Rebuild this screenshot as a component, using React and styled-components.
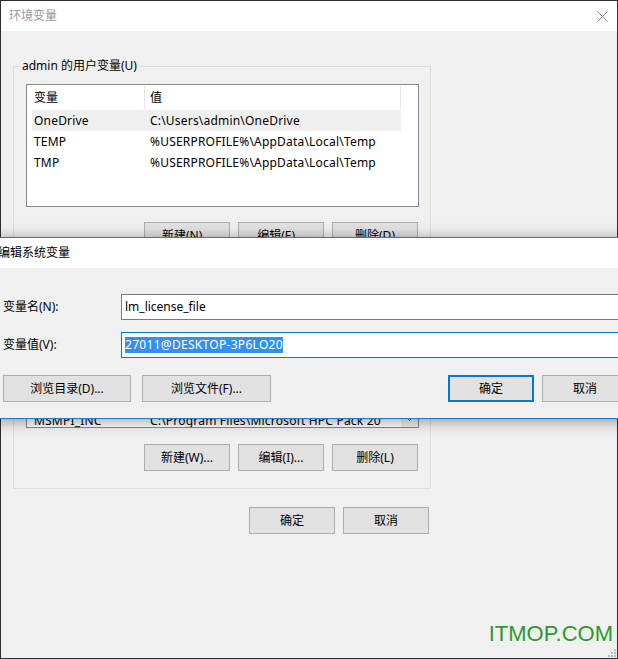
import React from 'react';
import styled, { createGlobalStyle } from 'styled-components';

const Global = createGlobalStyle`
  html, body { margin: 0; padding: 0; }
  body {
    width: 618px;
    height: 659px;
    overflow: hidden;
    background: #2b2d31;
    font-family: "Noto Sans", "Noto Sans CJK SC", sans-serif;
    font-size: 12px;
    color: #000;
  }
  * { box-sizing: border-box; }
`;

const Desktop = styled.div`
  position: relative;
  width: 618px;
  height: 659px;
  overflow: hidden;
  padding: 1px 1px 0 1px;
  background: #2b2d31;
`;

const Window = styled.div`
  position: relative;
  width: 616px;
  height: 657px;
  background: #f0f0f0;
  display: flex;
  flex-direction: column;
`;

const TitleBar = styled.div`
  flex: none;
  height: 30px;
  background: #fff;
  display: flex;
  align-items: center;
  justify-content: space-between;
  padding: 0 ${p => p.$padRight ?? 9}px 0 ${p => p.$padLeft ?? 8}px;
  color: ${p => (p.$active ? '#000' : '#999')};
  font-size: 12px;
  line-height: 16px;
`;

const CloseIcon = () => (
  <svg width="11" height="11" viewBox="0 0 11 11">
    <path d="M0.5 0.5 L10.5 10.5 M10.5 0.5 L0.5 10.5" stroke="#8a8a8a" strokeWidth="1" fill="none" />
  </svg>
);

const Body = styled.div`
  padding: 27px 0 0 12px;
  display: flex;
  flex-direction: column;
`;

const Group = styled.fieldset`
  margin: ${p => p.$top ?? 0}px 0 0 0;
  width: 418px;
  min-width: 0;
  border: 1px solid #dcdcdc;
  padding: 10px 11px ${p => p.$bottom ?? 17}px 12px;
`;

const Legend = styled.legend`
  margin-left: -6px;
  padding: 0 2px;
  line-height: 16px;
  font-size: 12px;
  color: #000;
`;

const ListBox = styled.div`
  height: ${p => p.$h}px;
  border: 1px solid #828790;
  background: #fff;
  display: flex;
  overflow: hidden;
`;

const ListRows = styled.div`
  flex: 1;
  min-width: 0;
  padding-left: 5px;
  display: flex;
  flex-direction: column;
  overflow: hidden;
`;

const HeaderRow = styled.div`
  flex: none;
  height: 25px;
  display: grid;
  grid-template-columns: 112px 1fr;
  background: #fff;
`;

const HeaderCell = styled.div`
  padding-left: ${p => (p.$first ? 2 : 5)}px;
  border-left: ${p => (p.$first ? 'none' : '1px solid #e5e5e5')};
  border-right: ${p => (p.$first ? 'none' : '1px solid #e5e5e5')};
  margin: 1px 0;
  line-height: 23px;
  white-space: nowrap;
`;

const Row = styled.div`
  flex: none;
  height: 21px;
  display: grid;
  grid-template-columns: 112px 1fr;
  line-height: 21px;
  background: ${p => (p.$selected ? '#efefef' : 'transparent')};
`;

const Cell = styled.div`
  padding-left: ${p => (p.$first ? 2 : 6)}px;
  padding-right: 6px;
  white-space: nowrap;
  overflow: hidden;
  text-overflow: ellipsis;
  letter-spacing: 0.2px;
`;

const ScrollGutter = styled.div`
  flex: none;
  width: 17px;
  background: ${p => (p.$track ? '#f0f0f0' : '#fff')};
  display: flex;
  flex-direction: column;
  justify-content: flex-end;
  align-items: center;
`;

const ArrowBox = styled.div`
  width: 17px;
  height: 17px;
  display: flex;
  align-items: center;
  justify-content: center;
`;

const ButtonRow = styled.div`
  margin-top: ${p => p.$top ?? 16}px;
  display: flex;
  justify-content: flex-end;
  gap: 8px;
  padding-right: ${p => p.$padRight ?? 0}px;
  width: ${p => (p.$w ? `${p.$w}px` : 'auto')};
`;

const Button = styled.button`
  flex: none;
  width: ${p => p.$w ?? 86}px;
  height: 27px;
  margin: 0;
  padding: 0;
  background: #e1e1e1;
  border: ${p => (p.$default ? '2px solid #0078d7' : '1px solid #adadad')};
  font-family: "Noto Sans", "Noto Sans CJK SC", sans-serif;
  font-size: 12px;
  color: #000;
  line-height: 16px;
`;

const Watermark = styled.div`
  position: absolute;
  right: 4px;
  bottom: 13px;
  font-family: "Liberation Sans", Arial, sans-serif;
  font-size: 22px;
  line-height: 1;
  color: #2b9a2b;
`;

const Grip = styled.svg`
  position: absolute;
  right: 1px;
  bottom: 1px;
`;

/* Edit dialog: a second window lying over the first */
const EditWindow = styled.div`
  position: absolute;
  left: -9px;
  top: 237px;
  width: 650px;
  border: 1px solid #1f7bd1;
  background: #f0f0f0;
  box-shadow: 0 2px 14px rgba(0, 0, 0, 0.4);
  display: flex;
  flex-direction: column;
`;

const EditBody = styled.div`
  padding: 26px 12px 16px 11px;
  display: flex;
  flex-direction: column;
`;

const FormGrid = styled.div`
  display: grid;
  grid-template-columns: 118px 1fr;
  row-gap: 12px;
  align-items: center;
`;

const Label = styled.div`
  line-height: 16px;
  white-space: nowrap;
`;

const Field = styled.div`
  height: 26px;
  border: 1px solid ${p => (p.$focus ? '#0078d7' : '#7a7a7a')};
  background: #fff;
  padding-left: 3px;
  display: flex;
  align-items: center;
  white-space: nowrap;
  line-height: 16px;
`;

const Selection = styled.span`
  background: #3390f0;
  color: #fff;
  line-height: 16px;
  letter-spacing: 0.3px;
`;

const DialogButtons = styled.div`
  margin-top: 17px;
  display: flex;
  align-items: center;
`;

const ButtonGroup = styled.div`
  display: flex;
  gap: ${p => p.$gap ?? 8}px;
  margin-left: ${p => (p.$right ? 'auto' : '0')};
`;

const userVars = [
  { name: 'OneDrive', value: 'C:\\Users\\admin\\OneDrive', selected: true },
  { name: 'TEMP', value: '%USERPROFILE%\\AppData\\Local\\Temp' },
  { name: 'TMP', value: '%USERPROFILE%\\AppData\\Local\\Temp' },
];

const systemVars = [
  { name: 'ComSpec', value: 'C:\\WINDOWS\\system32\\cmd.exe' },
  { name: 'DriverData', value: 'C:\\Windows\\System32\\Drivers\\DriverData' },
  { name: 'lm_license_file', value: '27011@DESKTOP-3P6LO20', selected: true },
  { name: 'MSMPI_BIN', value: 'C:\\Program Files\\Microsoft HPC Pack 2008 R2\\Bin\\' },
  { name: 'MSMPI_INC', value: 'C:\\Program Files\\Microsoft HPC Pack 20' },
  { name: 'NUMBER_OF_PROCESSORS', value: '4' },
];

function VarList({ rows, height, track }) {
  return (
    <ListBox $h={height}>
      <ListRows>
        <HeaderRow>
          <HeaderCell $first>变量</HeaderCell>
          <HeaderCell>值</HeaderCell>
        </HeaderRow>
        {rows.map(r => (
          <Row key={r.name} $selected={r.selected}>
            <Cell $first>{r.name}</Cell>
            <Cell>{r.value}</Cell>
          </Row>
        ))}
      </ListRows>
      <ScrollGutter $track={track}>
        {track && (
          <ArrowBox>
            <svg width="7" height="4" viewBox="0 0 7 4">
              <path d="M0 0 L3.5 3.5 L7 0" stroke="#606060" fill="none" />
            </svg>
          </ArrowBox>
        )}
      </ScrollGutter>
    </ListBox>
  );
}

export default function App() {
  return (
    <>
      <Global />
      <Desktop>
        <Window>
          <TitleBar>
            <span>环境变量</span>
            <CloseIcon />
          </TitleBar>
          <Body>
            <Group $bottom={12}>
              <Legend>admin 的用户变量(U)</Legend>
              <VarList rows={userVars} height={123} />
              <ButtonRow $top={15} $padRight={1}>
                <Button>新建(N)...</Button>
                <Button>编辑(E)...</Button>
                <Button>删除(D)</Button>
              </ButtonRow>
            </Group>
            <Group $top={12} $bottom={17}>
              <Legend>系统变量(S)</Legend>
              <VarList rows={systemVars} height={128} track />
              <ButtonRow $top={16} $padRight={1}>
                <Button>新建(W)...</Button>
                <Button>编辑(I)...</Button>
                <Button>删除(L)</Button>
              </ButtonRow>
            </Group>
            <ButtonRow $top={18} $w={418} $padRight={2}>
              <Button>确定</Button>
              <Button>取消</Button>
            </ButtonRow>
          </Body>
          <Watermark>ITMOP.COM</Watermark>
          <Grip width="10" height="10" viewBox="0 0 10 10">
            {[[8, 2], [8, 5], [8, 8], [5, 5], [5, 8], [2, 8]].map(([x, y]) => (
              <rect key={`${x}-${y}`} x={x} y={y} width="2" height="2" fill="#b8b8b8" />
            ))}
          </Grip>
        </Window>

        <EditWindow>
          <TitleBar $active $padLeft={6}>
            <span>编辑系统变量</span>
          </TitleBar>
          <EditBody>
            <FormGrid>
              <Label>变量名(N):</Label>
              <Field>lm_license_file</Field>
              <Label>变量值(V):</Label>
              <Field $focus>
                <Selection>27011@DESKTOP-3P6LO20</Selection>
              </Field>
            </FormGrid>
            <DialogButtons>
              <ButtonGroup $gap={11}>
                <Button $w={128}>浏览目录(D)...</Button>
                <Button $w={129}>浏览文件(F)...</Button>
              </ButtonGroup>
              <ButtonGroup $right $gap={8}>
                <Button $default>确定</Button>
                <Button>取消</Button>
              </ButtonGroup>
            </DialogButtons>
          </EditBody>
        </EditWindow>
      </Desktop>
    </>
  );
}
